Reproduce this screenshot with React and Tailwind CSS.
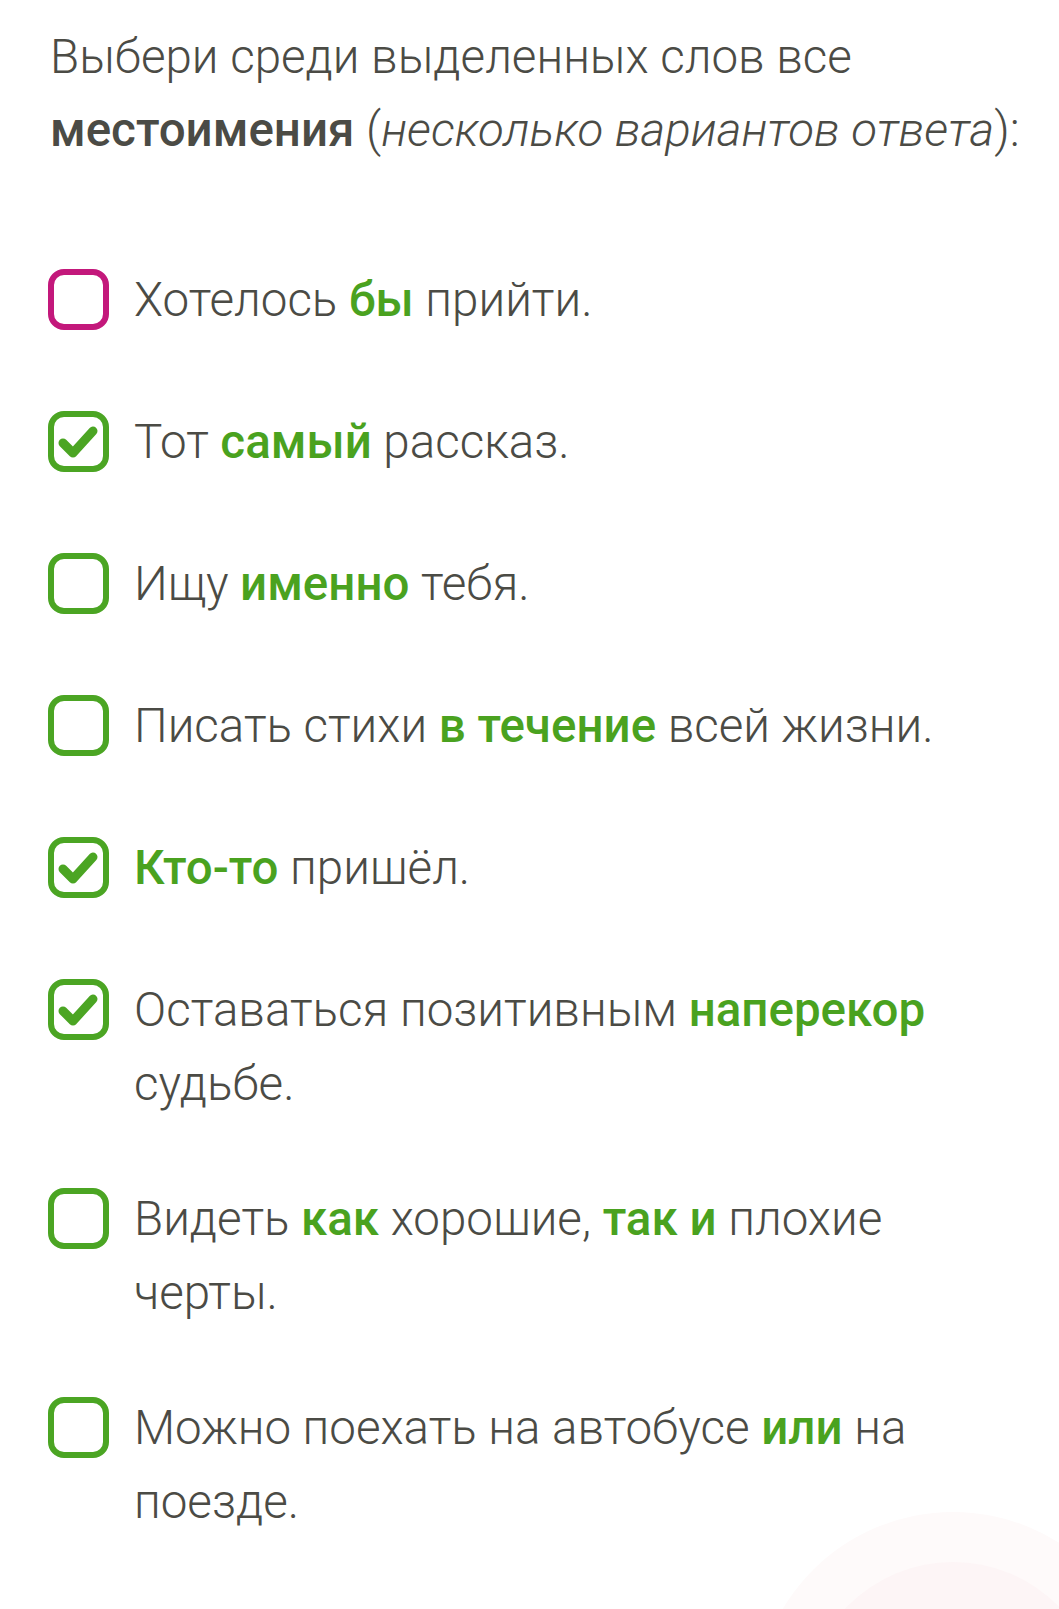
import React from "react";

const items = [
  { checked: false, error: true, parts: ["Хотелось ", ["бы"], " прийти."] },
  { checked: true, parts: ["Тот ", ["самый"], " рассказ."] },
  { checked: false, parts: ["Ищу ", ["именно"], " тебя."] },
  { checked: false, parts: ["Писать стихи ", ["в течение"], " всей жизни."] },
  { checked: true, parts: [["Кто-то"], " пришёл."] },
  { checked: true, parts: ["Оставаться позитивным ", ["наперекор"], " ", "судьбе."] },
  { checked: false, parts: ["Видеть ", ["как"], " хорошие, ", ["так и"], " плохие", " ", "черты."] },
  { checked: false, parts: ["Можно поехать на автобусе ", ["или"], " на", " ", "поезде."] },
];

function Box({ checked, error }) {
  const color = error ? "#c3187b" : "#4ba523";
  return (
    <svg width="61" height="61" viewBox="0 0 61 61" className="shrink-0 mt-[6px]">
      <rect x="3" y="3" width="55" height="55" rx="13" fill="none" stroke={color} strokeWidth="6" />
      {checked && (
        <polyline
          points="15,32 25,42 45,20"
          fill="none"
          stroke={color}
          strokeWidth="9"
          strokeLinecap="round"
          strokeLinejoin="round"
        />
      )}
    </svg>
  );
}

export default function App() {
  return (
    <div
      className="relative w-[1059px] h-[1609px] overflow-hidden bg-white text-[#4b4b45]"
      style={{ fontFamily: "Roboto, sans-serif" }}
    >
      {/* faint ripple bottom right */}
      <div className="absolute left-[755px] top-[1512px] w-[396px] h-[396px] rounded-full bg-[#fefafa]" />
      <div className="absolute left-[805px] top-[1562px] w-[296px] h-[296px] rounded-full bg-[#fdf5f6]" />

      <div className="relative pl-[50px] pr-[30px] pt-[21px]">
        <p className="text-[47.5px] leading-[73px] font-light">
          Выбери среди выделенных слов все <b className="font-medium">местоимения</b> (
          <i>несколько вариантов ответа</i>):
        </p>

        <div className="mt-[96px] flex flex-col gap-[61px]">
          {items.map((it, i) => (
            <div key={i} className="flex items-start gap-[25px] min-h-[81px] -ml-[2px]">
              <Box checked={it.checked} error={it.error} />
              <p className="text-[47.5px] leading-[74px] font-light">
                {it.parts.map((p, j) =>
                  Array.isArray(p) ? (
                    <span key={j} className="font-medium text-[#4aa21f]">
                      {p[0]}
                    </span>
                  ) : (
                    <span key={j}>{p}</span>
                  )
                )}
              </p>
            </div>
          ))}
        </div>
      </div>
    </div>
  );
}
